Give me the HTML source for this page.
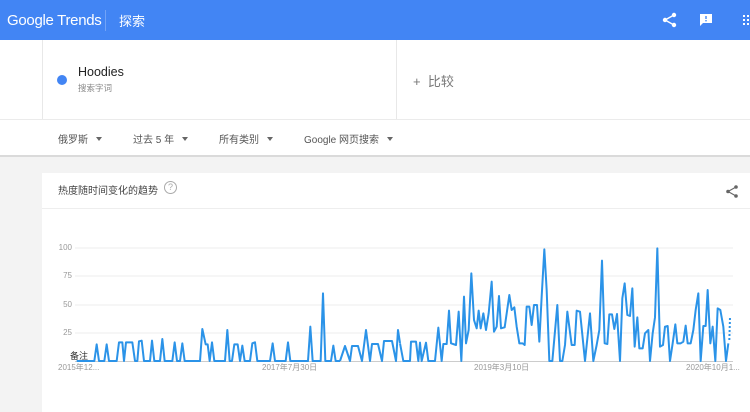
<!DOCTYPE html>
<html><head><meta charset="utf-8"><style>
*{margin:0;padding:0;box-sizing:border-box}
body{width:750px;height:412px;overflow:hidden;background:#f3f3f3;font-family:"Liberation Sans","Noto Sans CJK SC",sans-serif;position:relative}
.abs{position:absolute}
#hdr{left:0;top:0;width:750px;height:40px;background:#4285f4;color:#fff}
#search{left:0;top:40px;width:750px;height:79px;background:#fff}
#filters{left:0;top:119px;width:750px;height:38px;background:#fff;border-top:1px solid #ebebeb;border-bottom:2px solid #dadada}
.f{position:absolute;top:11px;font-size:10px;color:#555}
.f i{display:inline-block;width:0;height:0;border-left:3.5px solid transparent;border-right:3.5px solid transparent;border-top:4px solid #666;margin-left:8px;vertical-align:2px}
#card{left:42px;top:173px;width:708px;height:239px;background:#fff}
.yl{position:absolute;font-size:8px;color:#999;right:678px}
.xl{position:absolute;font-size:8px;color:#999;top:362px}
</style></head><body>
<div id="hdr" class="abs">
 <div class="abs" style="left:7px;top:12px;font-size:15px;letter-spacing:-0.3px">Google Trends</div>
 <div class="abs" style="left:105px;top:10px;width:1px;height:21px;background:rgba(255,255,255,.25)"></div>
 <div class="abs" style="left:119px;top:11px;font-size:13px">探索</div>
 <svg class="abs" style="left:662px;top:12px" width="15" height="16" viewBox="0 0 15 16"><circle cx="12" cy="3" r="2.2" fill="#fff"/><circle cx="3" cy="8" r="2.2" fill="#fff"/><circle cx="12" cy="13" r="2.2" fill="#fff"/><path d="M12 3L3 8L12 13" stroke="#fff" stroke-width="1.4" fill="none"/></svg>
 <svg class="abs" style="left:699px;top:13px" width="14" height="14" viewBox="0 0 14 14"><path d="M1 1h12v9H4l-3 3z" fill="#fff"/><rect x="6.3" y="3" width="1.4" height="3" fill="#4285f4"/><rect x="6.3" y="7" width="1.4" height="1.4" fill="#4285f4"/></svg>
 <svg class="abs" style="left:743px;top:15px" width="7" height="10"><g fill="#fff"><rect x="0" y="0" width="2" height="2"/><rect x="4" y="0" width="2" height="2"/><rect x="0" y="4" width="2" height="2"/><rect x="4" y="4" width="2" height="2"/><rect x="0" y="8" width="2" height="2"/><rect x="4" y="8" width="2" height="2"/></g></svg>
</div>
<div id="search" class="abs">
 <div class="abs" style="left:42px;top:0;width:1px;height:79px;background:#e8e8e8"></div>
 <div class="abs" style="left:396px;top:0;width:1px;height:79px;background:#e8e8e8"></div>
 <div class="abs" style="left:57px;top:35px;width:10px;height:10px;border-radius:50%;background:#4285f4"></div>
 <div class="abs" style="left:78px;top:25px;font-size:12.5px;color:#222">Hoodies</div>
 <div class="abs" style="left:78px;top:42px;font-size:8.5px;color:#888">搜索字词</div>
 <div class="abs" style="left:413px;top:31px;font-size:13px;color:#777">+&nbsp;&nbsp;比较</div>
</div>
<div id="filters" class="abs">
 <div class="f" style="left:58px">俄罗斯<i></i></div>
 <div class="f" style="left:133px">过去 5 年<i></i></div>
 <div class="f" style="left:219px">所有类别<i></i></div>
 <div class="f" style="left:304px">Google 网页搜索<i></i></div>
</div>
<div id="card" class="abs">
 <div class="abs" style="left:16px;top:9px;font-size:10px;color:#444">热度随时间变化的趋势</div>
 <div class="abs" style="left:122px;top:8px;width:13px;height:13px;border:1px solid #aaa;border-radius:50%;font-size:9px;color:#aaa;text-align:center;line-height:11px">?</div>
 <svg class="abs" style="left:684px;top:12px" width="12" height="13" viewBox="0 0 12 13"><circle cx="10" cy="2" r="1.8" fill="#666"/><circle cx="2" cy="6.5" r="1.8" fill="#666"/><circle cx="10" cy="11" r="1.8" fill="#666"/><path d="M10 2L2 6.5L10 11" stroke="#666" stroke-width="1.1" fill="none"/></svg>
 <div class="abs" style="left:0;top:35px;width:708px;height:1px;background:#eee"></div>
</div>
<div class="yl" style="top:243px">100</div>
<div class="yl" style="top:271px">75</div>
<div class="yl" style="top:300px">50</div>
<div class="yl" style="top:328px">25</div>
<div class="abs" style="left:70px;top:349px;font-size:9px;color:#333">备注</div>
<div class="xl" style="left:58px">2015年12...</div>
<div class="xl" style="left:262px">2017年7月30日</div>
<div class="xl" style="left:474px">2019年3月10日</div>
<div class="xl" style="left:686px">2020年10月1...</div>
<svg class="abs" style="left:0;top:0" width="750" height="412">
 <g stroke="#ececec" stroke-width="1"><line x1="75" y1="248" x2="733" y2="248"/><line x1="75" y1="276" x2="733" y2="276"/><line x1="75" y1="305" x2="733" y2="305"/><line x1="75" y1="333" x2="733" y2="333"/><line x1="75" y1="361.5" x2="733" y2="361.5" stroke="#ccc"/></g>
 <g transform="translate(40,170) scale(0.33333)" fill="none" stroke="#2b93e8" stroke-width="6" stroke-linejoin="round">
 <path d="M110 573 L163 573 L170 523 L177 573 L193 573 L200 523 L207 573 L230 573 L237 517 L247 517 L252 573 L258 517 L277 517 L285 573 L292 573 L297 514 L305 512 L312 573 L330 573 L336 512 L343 573 L360 573 L367 507 L374 573 L397 573 L404 517 L411 573 L420 573 L427 520 L434 573 L480 573 L487 477 L497 523 L503 523 L509 573 L516 517 L523 573 L555 573 L562 480 L569 573 L576 573 L583 523 L593 523 L600 573 L607 527 L614 573 L630 573 L637 520 L645 517 L652 573 L690 573 L698 520 L705 573 L737 573 L744 517 L751 573 L804 573 L811 470 L818 573 L842 573 L849 370 L856 573 L873 573 L880 527 L887 573 L900 573"/>
 </g>
 <path d="M340 361 L345 346 L350 361 L352 346 L358 346 L362 361 L366 330 L370 361 L372 344 L378 344 L382 361 L384 341 L392 341 L396 361 L398 330 L400 343" fill="none" stroke="#2b93e8" stroke-width="2" stroke-linejoin="round"/>
 <g transform="translate(400,230) scale(0.33333)" fill="none" stroke="#2b93e8" stroke-width="6" stroke-linejoin="round">
 <path d="M0 340 L10 393 L30 393 L33 335 L48 335 L55 393 L60 338 L65 393 L78 338 L85 393 L105 393 L115 293 L125 393 L130 342 L140 342 L147 242 L153 340 L168 345 L176 245 L184 393 L192 200 L198 340 L206 300 L214 130 L222 270 L230 295 L236 242 L242 295 L250 250 L258 300 L266 250 L275 155 L282 305 L290 290 L297 198 L303 295 L314 292 L328 195 L335 240 L343 232 L350 290 L358 340 L368 340 L374 345 L380 230 L388 230 L395 285 L402 225 L411 225 L418 335 L425 200 L433 58 L440 180 L448 393 L457 393 L472 225 L480 393 L487 393 L495 345 L502 245 L515 345 L524 345 L530 242 L540 245 L555 393 L570 250 L580 393 L590 345 L598 300 L606 92 L614 340 L622 342 L628 253 L636 253 L643 297 L651 252 L660 393 L667 205 L674 160 L682 255 L690 258 L697 175 L704 350 L712 262 L718 355 L728 355 L735 310 L745 300 L750 393 L758 310 L765 262 L772 55 L780 350 L789 345 L795 290 L803 288 L810 393 L818 340 L826 283 L832 340 L842 340 L850 335 L857 287 L863 340 L872 340 L880 300 L887 240 L895 190 L902 393 L910 288 L917 288 L923 180 L931 340 L938 290 L946 393 L953 235 L961 240 L970 290 L978 393 L985 340"/>
 <path d="M988 330 L990 262" stroke-dasharray="6 6"/>
 </g>
</svg>
</body></html>
